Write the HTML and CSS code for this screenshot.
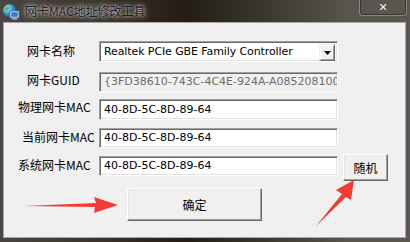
FILE: index.html
```html
<!DOCTYPE html>
<html>
<head>
<meta charset="utf-8">
<link rel="stylesheet" href="styles.css">
</head>
<body>
<div class="window">
  <div class="titlebar">
    <svg class="appicon" width="18" height="18" viewBox="0 0 18 18">
      <defs>
        <radialGradient id="g" cx="0.35" cy="0.35" r="0.7">
          <stop offset="0" stop-color="#bff0ff"/>
          <stop offset="0.5" stop-color="#3aa0e0"/>
          <stop offset="1" stop-color="#1a5fb0"/>
        </radialGradient>
      </defs>
      <circle cx="7.5" cy="7.5" r="6.5" fill="url(#g)"/>
      <path d="M3 5 Q5 3 7 4 Q8 6 6 7 Q4 8 3 7Z M8 9 Q10 8 11 10 Q10 12 8 12Z" fill="#4cbf3a"/>
      <rect x="8" y="8" width="9" height="7" fill="#dfe6ee" stroke="#5a6a80" stroke-width="0.8"/>
      <rect x="9.2" y="9.2" width="6.6" height="4.6" fill="#2f7fd8"/>
      <rect x="10" y="15" width="5" height="2" fill="#8a96a8"/>
    </svg>
    <span class="title">网卡MAC地址修改工具</span>
    <div class="closebtn"><span>✕</span></div>
  </div>
  <div class="client">
    <div class="row r1">
      <span class="label l1">网卡名称</span>
      <div class="combo">
        <span class="val">Realtek PCIe GBE Family Controller</span>
        <span class="dropbtn"><svg width="7" height="4" viewBox="0 0 7 4"><path d="M0 0H7L3.5 4Z" fill="#000"/></svg></span>
      </div>
    </div>
    <div class="row r2">
      <span class="label l2">网卡GUID</span>
      <div class="field disabled">{3FD38610-743C-4C4E-924A-A085208100</div>
    </div>
    <div class="row r3">
      <span class="label l3">物理网卡MAC</span>
      <div class="field">40-8D-5C-8D-89-64</div>
    </div>
    <div class="row r4">
      <span class="label l4">当前网卡MAC</span>
      <div class="field">40-8D-5C-8D-89-64</div>
    </div>
    <div class="row r5">
      <span class="label l5">系统网卡MAC</span>
      <div class="field">40-8D-5C-8D-89-64</div>
      <div class="btn rand">随机</div>
    </div>
    <div class="okrow">
      <div class="btn ok">确定</div>
    </div>
    <svg class="arrow a1" width="100" height="20" viewBox="0 0 100 20">
      <path d="M0 9 L72 6 L70 0 L94 8 L70 16 L71 10 Z" fill="#f23b33"/>
    </svg>
    <svg class="arrow a2" width="50" height="50" viewBox="0 0 50 50">
      <path d="M2 48 L28 16 L22 12 L40 2 L37 22 L32 19 Z" fill="#f23b33"/>
    </svg>
  </div>
</div>
</body>
</html>
```
FILE: styles.css
```css
html, body {
  margin: 0;
  padding: 0;
  width: 410px;
  height: 242px;
  overflow: hidden;
}
body {
  background: #3b3834;
  font-family: "Noto Sans CJK SC", sans-serif;
}
.window {
  position: relative;
  width: 410px;
  height: 242px;
  background: linear-gradient(90deg, #4a4540 0%, #3a332c 25%, #231c17 45%, #3c3731 65%, #58544e 85%, #5a5751 100%);
}
.titlebar {
  height: 22px;
  display: flex;
  align-items: center;
  position: relative;
}
.appicon {
  margin-left: 2px;
  margin-top: 1px;
}
.title {
  margin-left: 5px;
  font-size: 12px;
  color: #1c1c30;
  text-shadow: 0 0 6px rgba(235, 230, 220, 0.85), 0 0 3px rgba(235, 230, 220, 0.9);
  line-height: 14px;
}
.closebtn {
  position: absolute;
  right: 3px;
  top: -2px;
  width: 46px;
  height: 17px;
  border: 1px solid #8a8680;
  border-top: none;
  border-radius: 0 0 4px 4px;
  box-shadow: inset 0 0 0 1px #3a3732;
  display: flex;
  align-items: center;
  justify-content: center;
}
.closebtn span {
  color: #f4f4f8;
  font-family: "DejaVu Sans", sans-serif;
  font-weight: bold;
  font-size: 11px;
  margin-top: 2px;
}
.client {
  position: absolute;
  left: 3px;
  top: 22px;
  width: 401px;
  height: 214px;
  background: #f0f0f0;
  border: 1px solid #a9a7a3;
}
.row {
  display: flex;
  align-items: flex-start;
  position: absolute;
  left: 0;
}
.r1 { top: 18px; }
.r2 { top: 49px; }
.r3 { top: 76px; }
.r4 { top: 105px; }
.r5 { top: 133px; }
.label {
  font-size: 12px;
  color: #000;
  line-height: 16px;
  width: 95px;
  white-space: nowrap;
  box-sizing: border-box;
}
.l1 { padding-left: 23px; margin-top: 2px; }
.l2 { padding-left: 23px; margin-top: 0px; }
.l3 { padding-left: 14px; margin-top: 0px; }
.l4 { padding-left: 18px; margin-top: 1px; }
.l5 { padding-left: 14px; margin-top: 1px; }
.combo, .field {
  width: 239px;
  box-sizing: border-box;
  background: #fff;
  border-top: 1px solid #a0a0a0;
  border-left: 1px solid #a0a0a0;
  border-right: 1px solid #ffffff;
  border-bottom: 1px solid #ffffff;
  box-shadow: inset 1px 1px 0 #696969, inset -1px -1px 0 #e3e3e3;
  font-family: "DejaVu Sans", sans-serif;
  font-size: 11px;
  color: #000;
  white-space: nowrap;
  overflow: hidden;
}
.combo {
  height: 21px;
  display: flex;
  align-items: center;
  position: relative;
  padding-left: 4px;
}
.combo .val {
  flex: 1;
  letter-spacing: -0.1px;
}
.dropbtn {
  position: absolute;
  right: 2px;
  top: 2px;
  width: 16px;
  height: 17px;
  box-sizing: border-box;
  background: #f0f0f0;
  border-top: 1px solid #f0f0f0;
  border-left: 1px solid #f0f0f0;
  border-right: 1px solid #696969;
  border-bottom: 1px solid #696969;
  box-shadow: inset 1px 1px 0 #fff, inset -1px -1px 0 #a0a0a0;
  display: flex;
  align-items: center;
  justify-content: center;
}
.field {
  height: 20px;
  line-height: 18px;
  padding-left: 4px;
}
.r3 .field { height: 21px; line-height: 19px; }
.field.disabled {
  background: #f0f0f0;
  color: #6d6d6d;
}
.btn {
  box-sizing: border-box;
  background: #f0f0f0;
  border-top: 1px solid #fff;
  border-left: 1px solid #fff;
  border-right: 1px solid #696969;
  border-bottom: 1px solid #696969;
  box-shadow: inset -1px -1px 0 #a0a0a0, inset 1px 1px 0 #e3e3e3;
  display: flex;
  align-items: center;
  justify-content: center;
  font-size: 12px;
  color: #000;
}
.rand {
  width: 45px;
  height: 27px;
  margin-left: 5px;
  margin-top: -2px;
}
.okrow {
  position: absolute;
  top: 165px;
  left: 123px;
}
.ok {
  width: 135px;
  height: 33px;
}
.arrow {
  position: absolute;
}
.a1 {
  left: 20px;
  top: 174px;
}
.a2 {
  left: 310px;
  top: 155px;
}
```
